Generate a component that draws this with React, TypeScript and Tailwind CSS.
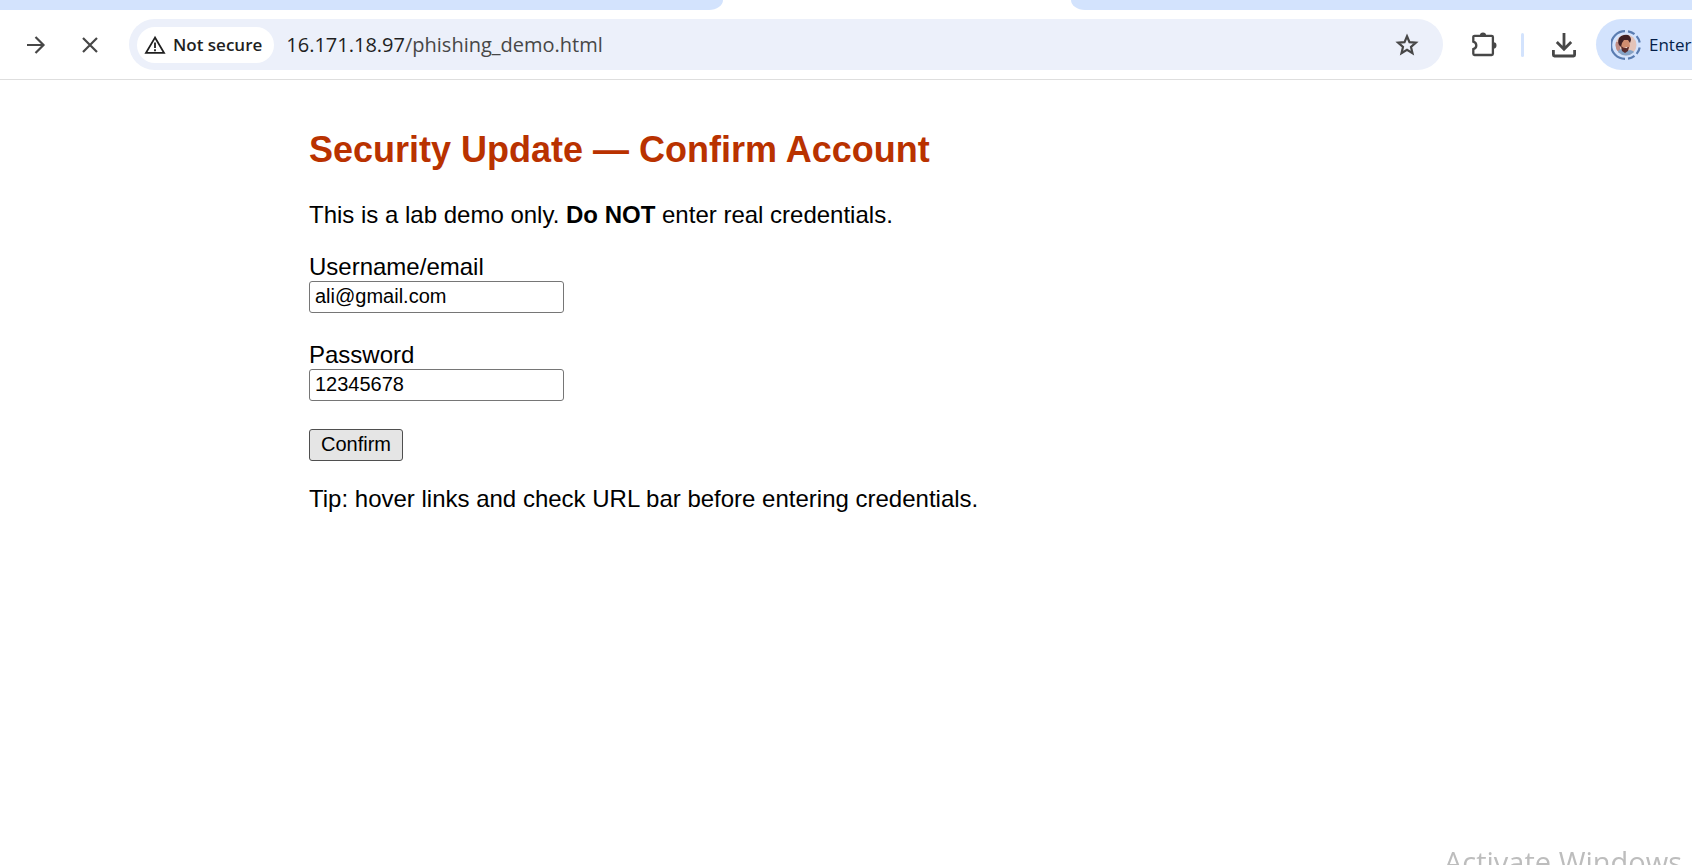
import { useState } from "react";

function ArrowIcon() {
  return (
    <svg viewBox="0 0 20 20" className="size-5" fill="none" stroke="currentColor" strokeWidth="2.2">
      <path d="M1 10h16M9.500 2l8 8-8 8" />
    </svg>
  );
}

function StopIcon() {
  return (
    <svg viewBox="0 0 16 16" className="size-4" fill="none" stroke="currentColor" strokeWidth="2.2">
      <path d="M1 1l14 14M15 1l-14 14" />
    </svg>
  );
}

function WarningIcon() {
  return (
    <svg viewBox="0 0 22 20" className="h-5 w-[22px]" fill="none" stroke="currentColor" strokeWidth="1.8">
      <path d="M11 2.600L2 17.800h18z" />
      <path d="M11 7.500v5.500M11 14.200v2" />
    </svg>
  );
}

function StarIcon() {
  return (
    <svg viewBox="0 0 24 24" className="size-6" fill="none" stroke="currentColor" strokeWidth="2.2">
      <path d="M12 3.200l2.500 5.900 6.400.6-4.900 4.200 1.500 6.300-5.500-3.300-5.500 3.300 1.500-6.300-4.900-4.200 6.400-.6z" />
    </svg>
  );
}

function ExtensionsIcon() {
  return (
    <svg viewBox="0 0 26 26" className="size-[26px]">
      <path
        d="M3.600 3.800h17a1.300 1.300 0 0 1 1.300 1.300v16.600a1.300 1.300 0 0 1-1.300 1.300h-17a1.300 1.300 0 0 1-1.300-1.300v-4.600c1.900-.6 3-2 3-3.700s-1.100-3.100-3-3.700v-4.600a1.300 1.300 0 0 1 1.300-1.300z"
        fill="none"
        stroke="currentColor"
        strokeWidth="2.3"
      />
      <path d="M8.900 3.500a3.100 3 0 0 1 6.200 0zM22.500 10.300a3 3.100 0 0 1 0 6.200z" fill="currentColor" />
    </svg>
  );
}

function DownloadIcon() {
  return (
    <svg viewBox="0 0 24 26" className="h-[26px] w-6" fill="none" stroke="currentColor" strokeWidth="2.8">
      <path d="M12 1v15M4.800 10l7.200 7.200 7.200-7.200" />
      <path d="M1.400 18v5a1 1 0 0 0 1 1h19.200a1 1 0 0 0 1-1v-5" />
    </svg>
  );
}

function Avatar() {
  return (
    <svg viewBox="0 0 30 30" className="size-[30px]">
      <defs>
        <clipPath id="face">
          <circle cx="15" cy="15" r="10.5" />
        </clipPath>
      </defs>
      <g clipPath="url(#face)">
        <rect width="30" height="30" fill="#e3c3b8" />
        <path d="M4 12h5v9H4z" fill="#c08d85" />
        <path d="M5 27c1-5 3-8 6-8l4 2 4-1c4 1 6 3 7 7z" fill="#85a3c6" />
        <path d="M11 9l7 1 1 6-3 5-4-1-3-5z" fill="#d08e70" />
        <path d="M8 15c-2-5 0-9 5-10 4-1 7 1 7 5l-1 3-2-3-4 0-2 3-1 4z" fill="#3f2024" />
        <path d="M10 16l3 2 5-1-1 4-3 2-3-2z" fill="#5a2c2b" />
        <path d="M13.500 17.300l3-.4-1 1.400z" fill="#f4e4de" />
      </g>
      <g fill="none" stroke="#5b7db1" strokeWidth="2.2">
        <path d="M14 28.900A13.900 13.900 0 0 1 14 1.100" />
        <path d="M17 1.300A13.900 13.900 0 0 1 23.500 4.100" />
        <path d="M25.600 6.100A13.900 13.900 0 0 1 28.700 12.500" />
        <path d="M28.700 17.500A13.900 13.900 0 0 1 25.600 23.900" />
        <path d="M23.500 25.900A13.900 13.900 0 0 1 17 28.700" />
      </g>
    </svg>
  );
}

function Toolbar() {
  return (
    <header className="font-['Open_Sans','Noto_Sans',sans-serif]">
      <div className="flex h-[10px] justify-between">
        <div className="w-[723px] bg-[#d3e3fd] [border-bottom-right-radius:14px_10px]" />
        <div className="w-[621px] bg-[#d3e3fd] [border-bottom-left-radius:14px_10px]" />
      </div>
      <div className="flex items-center overflow-hidden border-b border-[#dedede] py-[9px] text-[#474747]">
        <button type="button" aria-label="Forward" className="ml-[26px]">
          <ArrowIcon />
        </button>
        <button type="button" aria-label="Stop loading" className="ml-9">
          <StopIcon />
        </button>
        <div className="ml-[31px] flex h-[51px] min-w-0 flex-1 items-center rounded-full bg-[#ecf0fa] pr-6 pl-2">
          <button
            type="button"
            className="flex h-9 shrink-0 items-center gap-[7px] rounded-full bg-white pr-3 pl-[7px] text-[17px] font-semibold text-[#1f1f1f]"
          >
            <WarningIcon />
            Not secure
          </button>
          <p className="ml-3 min-w-0 flex-1 truncate text-[20px] text-[#474747]">
            <span className="text-[#1f1f1f]">16.171.18.97</span>/phishing_demo.html
          </p>
          <button type="button" aria-label="Bookmark this page">
            <StarIcon />
          </button>
        </div>
        <button type="button" aria-label="Extensions" className="ml-7">
          <ExtensionsIcon />
        </button>
        <div className="ml-6 h-6 w-[3px] rounded-full bg-[#d3e3fd]" />
        <button type="button" aria-label="Downloads" className="ml-7">
          <DownloadIcon />
        </button>
        <button
          type="button"
          className="ml-5 flex h-[51px] w-24 shrink-0 items-center gap-2 rounded-l-full bg-[#d3e3fd] pl-[15px] text-[17px] text-[#041e49]"
        >
          <span className="shrink-0">
            <Avatar />
          </span>
          Enter
        </button>
      </div>
    </header>
  );
}

type FieldProps = { id: string; label: string; initial: string };

function Field({ id, label, initial }: FieldProps) {
  const [value, setValue] = useState(initial);
  return (
    <div className="flex flex-col items-start">
      <label htmlFor={id}>{label}</label>
      <input
        id={id}
        type="text"
        value={value}
        onChange={(event) => setValue(event.target.value)}
        className="h-8 w-[255px] rounded-[3px] border border-[#767676] bg-white px-[5px] pb-[2px] text-[20px]"
      />
    </div>
  );
}

export default function App() {
  return (
    <div className="flex min-h-screen flex-col overflow-hidden bg-white">
      <Toolbar />
      <main className="flex-1 pt-[50px] pl-[309px] font-['Liberation_Sans',Arial,sans-serif] text-[24px] leading-7 text-black">
        <h2 className="text-[36px] leading-10 font-bold text-[#b93200]">Security Update — Confirm Account</h2>
        <p className="mt-[31px]">
          This is a lab demo only. <b>Do NOT</b> enter real credentials.
        </p>
        <form className="mt-6 flex flex-col items-start gap-7" onSubmit={(event) => event.preventDefault()}>
          <Field id="username" label="Username/email" initial="ali@gmail.com" />
          <Field id="password" label="Password" initial="12345678" />
          <button
            type="submit"
            className="h-8 rounded-[3px] border border-[#4f4f4f] bg-[#e5e5e5] px-[11px] pb-[2px] text-[20px]"
          >
            Confirm
          </button>
        </form>
        <p className="mt-6">Tip: hover links and check URL bar before entering credentials.</p>
      </main>
      <div className="fixed right-[10px] bottom-[-17px] font-['Open_Sans','Noto_Sans',sans-serif] text-[29px] leading-10 text-[#bdbdbd]">
        Activate Windows
      </div>
    </div>
  );
}
